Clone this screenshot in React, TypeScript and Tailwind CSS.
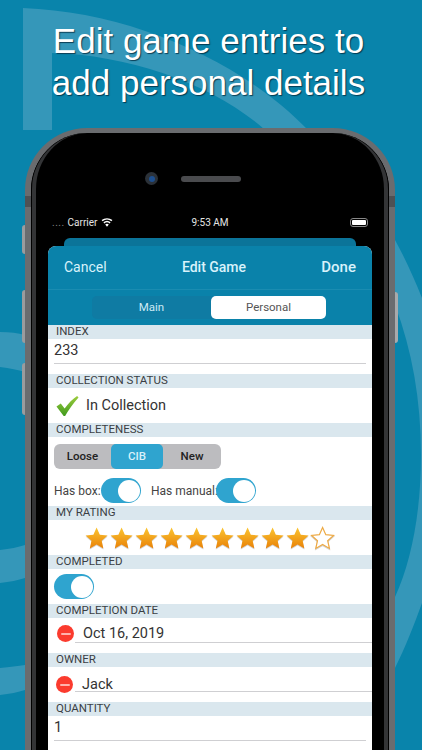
import type { ReactNode } from 'react';

const font = { fontFamily: 'Roboto, "Liberation Sans", sans-serif' };

function SectionBar({ label }: { label: string }) {
  return (
    <div className="flex h-[14px] items-center bg-[#dae7ee] pl-2 text-[11.5px] leading-none text-[#3a3f44]">{label}</div>
  );
}

function Toggle() {
  return (
    <div className="flex h-[25px] w-[40px] items-center justify-end rounded-full bg-[#2fa4cf] pr-[1.5px]">
      <div className="size-[22px] rounded-full bg-white" />
    </div>
  );
}

function Field({ children }: { children: ReactNode }) {
  return (
    <div className="mx-[6px] flex h-[25px] items-center border-b border-[#cfcfd2] text-[14.5px] text-[#333]">{children}</div>
  );
}

function MinusField({ value, rowClass, textClass }: { value: string; rowClass: string; textClass: string }) {
  return (
    <div className="relative h-[35px]">
      <div className={`absolute flex size-[17px] items-center justify-center rounded-full bg-[#fb3b2e] ${rowClass}`}>
        <div className="h-[2px] w-[10px] rounded-full bg-[#ffb3ad]" />
      </div>
      <div className="ml-[27px] h-[25px] border-b border-[#cfcfd2]">
        <div className={`text-[14.5px] leading-[17px] text-[#333] ${textClass}`}>{value}</div>
      </div>
    </div>
  );
}

function Star({ filled }: { filled: boolean }) {
  const d = 'M12 1.5l3.2 7.2 7.8.8-5.9 5.2 1.7 7.7L12 18.4l-6.8 4 1.7-7.7L1 9.5l7.8-.8z';
  return (
    <svg viewBox="0 0 24 24" className="h-[24px] w-[25.2px] drop-shadow-[0_1px_0_rgba(0,0,0,0.18)]">
      <defs>
        <linearGradient id="starFill" x1="0" y1="0" x2="0" y2="1">
          <stop offset="0" stopColor="#fbc531" />
          <stop offset="1" stopColor="#e98208" />
        </linearGradient>
      </defs>
      {filled ? <path d={d} fill="url(#starFill)" /> : <path d={d} fill="#fff" stroke="#eeaa44" strokeWidth="1.2" />}
    </svg>
  );
}

function Background() {
  return (
    <svg viewBox="0 0 422 750" className="absolute inset-0 h-[750px] w-[422px]" fill="#3597b9">
      <path d="M23 8 V130 H52 V53 C130 55 215 85 265 130 H308 C240 60 130 12 23 8 Z" />
      <path d="M395 240 C405 258 414 278 422 298 V603 C414 625 405 648 395 668 V597 C412 560 421 510 421 455 C421 400 412 350 395 305 Z" />
      <path d="M0 332 C10 332 18 333 25 335 V372 C18 370 10 368 0 367 Z" />
      <path d="M0 550 C10 549 18 547 25 545 V578 C18 580 10 582 0 583 Z" />
      <path d="M0 668 C10 667 18 666 25 665 V690 C18 692 10 694 0 695 Z" />
    </svg>
  );
}

export default function App() {
  return (
    <div style={font} className="relative h-[750px] w-[422px] overflow-hidden bg-[#0984ab]">
      <Background />

      <div
        style={{ fontFamily: '"Liberation Sans", Arial, sans-serif' }}
        className="relative pr-[5px] pt-[20px] text-center text-[35px] leading-[42px] text-white [text-shadow:1px_1px_1px_rgba(0,40,60,0.8)]"
      >
        <div>Edit game entries to</div>
        <div>add personal details</div>
      </div>

      <div className="relative ml-[25px] mt-[24px] w-[370px]">
        {/* side buttons and antenna bands */}
        <div className="absolute left-[-3px] top-[97px] h-[29px] w-[3px] rounded-l-sm bg-[#9a9c9e]" />
        <div className="absolute left-[-3px] top-[162px] h-[53px] w-[3px] rounded-l-sm bg-[#9a9c9e]" />
        <div className="absolute left-[-3px] top-[235px] h-[52px] w-[3px] rounded-l-sm bg-[#9a9c9e]" />
        <div className="absolute right-[-3px] top-[164px] h-[51px] w-[3px] rounded-r-sm bg-[#a8aaac]" />
        <div className="absolute left-0 top-[68px] h-[11px] w-[6px] bg-[#4f5154]" />
        <div className="absolute right-0 top-[68px] h-[11px] w-[6px] bg-[#4f5154]" />

        <div className="h-[640px] rounded-t-[62px] border-x-[6px] border-t-[5px] border-[#6a6c6f] bg-black">
          <div className="h-full rounded-t-[57px] border-x border-black">
            <div className="h-full rounded-t-[56px] border-x-4 border-[#333436] px-[12px] pt-[39px]">
              <div className="flex items-center gap-[23px] pl-[97px]">
                <div className="flex size-[13px] items-center justify-center rounded-full bg-[#2b3138]">
                  <div className="size-[6px] rounded-full bg-[#1d4f8f]" />
                </div>
                <div className="h-[6px] w-[60px] rounded-full bg-[#4a4b4e]" />
              </div>

              <div className="mt-[29px] grid h-[16px] grid-cols-3 items-center text-[10px] text-[#e4e4e4]">
                <div className="flex items-center gap-[3px] pl-[4px]">
                  <span className="tracking-[0.5px] text-[#888]">....</span>
                  <span>Carrier</span>
                  <svg viewBox="0 0 16 12" className="ml-[1px] h-[9px] w-[12px]" fill="#fff">
                    <path d="M8 11.5 5.6 8.6a3.6 3.6 0 0 1 4.8 0zM4.5 7.3 3.2 5.7a7.4 7.4 0 0 1 9.6 0l-1.3 1.6a5.4 5.4 0 0 0-7 0zM2.1 4.4.8 2.8a11.2 11.2 0 0 1 14.4 0l-1.3 1.6a9.2 9.2 0 0 0-11.8 0z" />
                  </svg>
                </div>
                <div className="text-center">9:53 AM</div>
                <div className="flex justify-end pr-[4px]">
                  <div className="flex h-[9px] w-[18px] items-center rounded-[3px] border border-[#888] p-[1px]">
                    <div className="h-full w-full rounded-[1px] bg-white" />
                  </div>
                </div>
              </div>

              <div className="mx-[16px] mt-[8px] h-[8px] rounded-t-[6px] bg-[#0b7499]" />

              <div className="overflow-hidden rounded-t-[8px] bg-white">
                <div className="bg-[#0a82aa]">
                  <div className="flex h-[44px] items-center justify-between border-b border-[#1a8cb1] px-[16px] text-[#d8f2fb]">
                    <span className="text-[14px]">Cancel</span>
                    <span className="text-[14px] font-medium">Edit Game</span>
                    <span className="text-[15px] font-medium">Done</span>
                  </div>
                  <div className="flex h-[35px] items-start pl-[44px] pt-[6px]">
                    <div className="flex h-[23px] w-[234px] rounded-[5px] bg-[#0f7ba3] text-[11.5px]">
                      <div className="flex flex-1 items-center justify-center text-[#cdeaf5]">Main</div>
                      <div className="flex w-[115px] items-center justify-center rounded-[5px] bg-white text-[#555]">Personal</div>
                    </div>
                  </div>
                </div>

                <SectionBar label="INDEX" />
                <div className="h-[35px]">
                  <Field>233</Field>
                </div>

                <SectionBar label="COLLECTION STATUS" />
                <div className="flex h-[35px] items-center pl-[8px]">
                  <svg viewBox="0 0 24 22" className="h-[22px] w-[23px]">
                    <defs>
                      <linearGradient id="checkFill" x1="0" y1="0" x2="0" y2="1">
                        <stop offset="0" stopColor="#9ccc3c" />
                        <stop offset="1" stopColor="#3f9a1e" />
                      </linearGradient>
                    </defs>
                    <path d="M0.5 11.5 5 8.5 9 13.5C13 8 17.5 3.5 22 0.5L23.5 2C18 8 13 15 9.5 21.5L8 21.5Z" fill="url(#checkFill)" />
                  </svg>
                  <span className="ml-[7px] text-[14.5px] text-[#333]">In Collection</span>
                </div>

                <SectionBar label="COMPLETENESS" />
                <div className="ml-[6px] mt-[7px] flex h-[25px] w-[167px] rounded-[6px] bg-[#bcbcbf] text-[11.5px] font-medium text-[#222]">
                  <div className="flex w-[57px] items-center justify-center">Loose</div>
                  <div className="flex w-[52px] items-center justify-center rounded-[5px] bg-[#2fa4cf] text-[#d9f1fa]">CIB</div>
                  <div className="flex flex-1 items-center justify-center">New</div>
                </div>
                <div className="ml-[6px] mt-[9px] flex h-[25px] items-center text-[12px] text-[#444]">
                  <span className="w-[44px] whitespace-nowrap">Has box:</span>
                  <div className="ml-[3px]">
                    <Toggle />
                  </div>
                  <span className="ml-[10px] w-[62px] whitespace-nowrap">Has manual:</span>
                  <div className="ml-[3px]">
                    <Toggle />
                  </div>
                </div>
                <div className="h-[3px]" />

                <SectionBar label="MY RATING" />
                <div className="flex h-[35px] items-start justify-center pr-[1px] pt-[6px]">
                  {[1, 2, 3, 4, 5, 6, 7, 8, 9, 10].map((n) => (
                    <Star key={n} filled={n < 10} />
                  ))}
                </div>

                <SectionBar label="COMPLETED" />
                <div className="flex h-[35px] items-center pl-[6px]">
                  <Toggle />
                </div>

                <SectionBar label="COMPLETION DATE" />
                <MinusField value="Oct 16, 2019" rowClass="left-[9px] top-[7px]" textClass="pl-[8px] pt-[7px]" />

                <SectionBar label="OWNER" />
                <MinusField value="Jack" rowClass="left-[8px] top-[9px]" textClass="pl-[7px] pt-[9px]" />

                <SectionBar label="QUANTITY" />
                <div className="h-[35px]">
                  <Field>1</Field>
                </div>
              </div>
            </div>
          </div>
        </div>
      </div>
    </div>
  );
}
